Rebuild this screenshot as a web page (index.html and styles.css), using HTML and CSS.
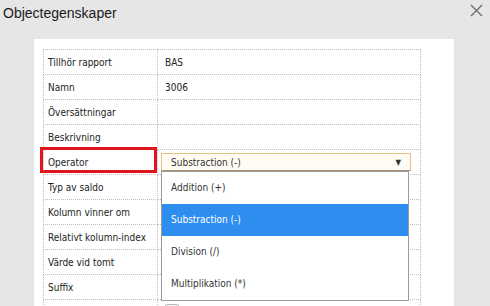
FILE: index.html
```html
<!DOCTYPE html>
<html>
<head>
<meta charset="utf-8">
<link rel="stylesheet" href="styles.css">
</head>
<body>
<div class="header">
  <div class="title">Objectegenskaper</div>
  <svg class="close" width="13" height="13" viewBox="0 0 13 13"><path d="M1 1L12 12M12 1L1 12" stroke="#6f6f6f" stroke-width="1.4" fill="none"/></svg>
</div>
<div class="panel">
  <table class="props">
    <colgroup><col class="c1"><col class="c2"></colgroup>
    <tr><td class="label">Tillhör rapport</td><td class="value">BAS</td></tr>
    <tr><td class="label">Namn</td><td class="value">3006</td></tr>
    <tr><td class="label">Översättningar</td><td class="value"></td></tr>
    <tr><td class="label">Beskrivning</td><td class="value"></td></tr>
    <tr><td class="label op">Operator<span class="redbox"></span></td><td class="value selcell">
      <div class="select"><span>Substraction (-)</span><span class="arrow">▼</span></div>
      <div class="list">
        <div class="opt">Addition (+)</div>
        <div class="opt sel">Substraction (-)</div>
        <div class="opt">Division (/)</div>
        <div class="opt">Multiplikation (*)</div>
      </div>
    </td></tr>
    <tr><td class="label">Typ av saldo</td><td class="value"></td></tr>
    <tr><td class="label">Kolumn vinner om</td><td class="value"></td></tr>
    <tr><td class="label">Relativt kolumn-index</td><td class="value"></td></tr>
    <tr><td class="label">Värde vid tomt</td><td class="value"></td></tr>
    <tr><td class="label">Suffix</td><td class="value"></td></tr>
    <tr><td class="label"></td><td class="value"><span class="chk"></span></td></tr>
  </table>
</div>
</body>
</html>
```
FILE: styles.css
```css
html, body { margin: 0; padding: 0; }
body {
  background: #e6e6e6;
  width: 490px;
  height: 306px;
  overflow: hidden;
  font-family: "DejaVu Sans Condensed", "DejaVu Sans", sans-serif;
  font-stretch: condensed;
}
.header {
  height: 39px;
  display: flex;
  justify-content: space-between;
  align-items: flex-start;
}
.title {
  font-family: "Liberation Sans", Arial, sans-serif;
  font-stretch: normal;
  font-size: 14px;
  color: #1a1a1a;
  padding: 5px 0 0 3px;
}
.close { margin: 4px 7px 0 0; }
.panel {
  background: #fff;
  margin-left: 34px;
  width: 420px;
  height: 267px;
  padding: 10px 0 0 9px;
  box-sizing: border-box;
  overflow: hidden;
}
.props {
  border-collapse: collapse;
  table-layout: fixed;
  width: 378px;
  font-size: 10px;
  color: #222;
}
.c1 { width: 114px; }
.props td {
  border: 1px dotted #bdbdbd;
  height: 24px;
  padding: 0 0 0 4px;
  vertical-align: middle;
  white-space: nowrap;
}
.props td.value { padding-left: 7px; }
.op { position: relative; }
.redbox {
  position: absolute;
  left: -4px;
  top: -3px;
  width: 111px;
  height: 20px;
  border: 3px solid #e0161c;
}
.props td.selcell { position: relative; padding-left: 3px; overflow: visible; }
.select {
  width: 230px;
  height: 16px;
  border: 1px solid #e6c07f;
  border-bottom-color: #b09070;
  background: #fffcf6;
  display: flex;
  justify-content: space-between;
  align-items: center;
  padding: 0 9px;
  color: #333;
}
.arrow { font-size: 8px; color: #333; }
.list {
  position: absolute;
  left: 3px;
  top: 21px;
  width: 246px;
  border: 1px solid #9a9a9a;
  background: #fff;
  z-index: 2;
}
.opt {
  height: 32px;
  line-height: 32px;
  padding-left: 9px;
  color: #333;
}
.opt.sel { background: #2e8ef0; color: #fff; }
.chk {
  display: inline-block;
  width: 12px;
  height: 12px;
  border: 1px solid #bbb;
  border-radius: 2px;
  background: #f4f4f4;
}
```
